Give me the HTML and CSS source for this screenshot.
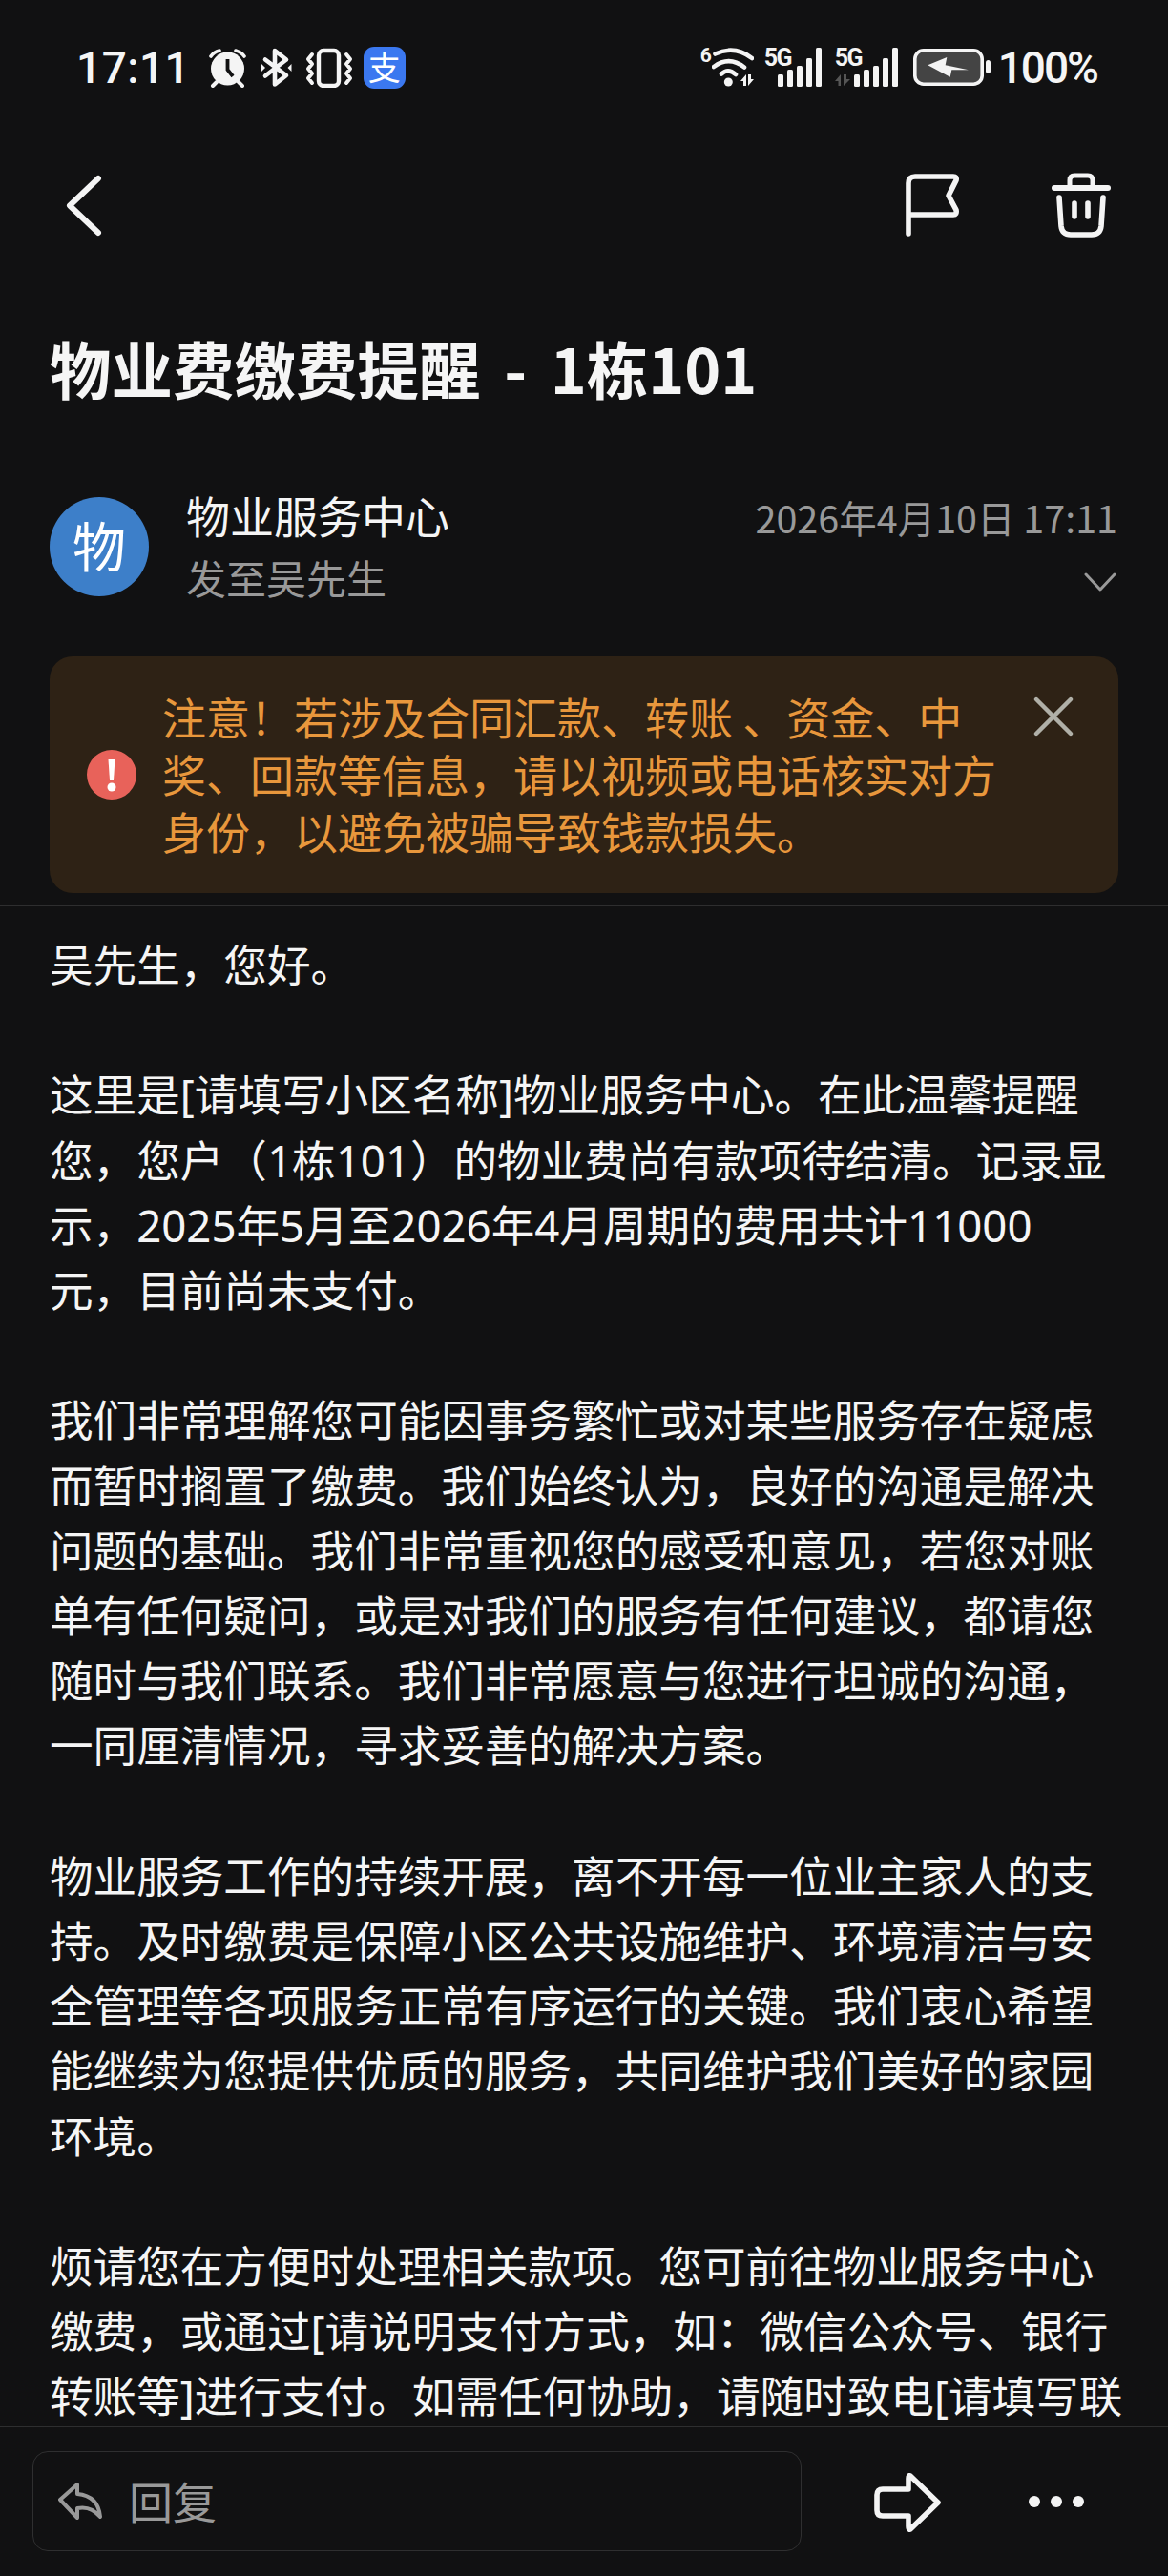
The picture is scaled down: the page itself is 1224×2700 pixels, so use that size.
FILE: index.html
```html
<!DOCTYPE html>
<html lang="zh-CN">
<head>
<meta charset="utf-8">
<title>物业费缴费提醒</title>
<link rel="stylesheet" href="styles.css">
</head>
<body>
<div class="page">
  <header class="statusbar">
    <div class="status-left">
      <span class="clock">17:11</span>
      <svg class="ic-alarm" width="40" height="42" viewBox="0 0 40 42">
        <circle cx="19.500" cy="22" r="17.500" fill="#f4f4f4"/>
        <path d="M2 9 C4 6 7 4 11 3 M37 9 C35 6 32 4 28 3" fill="none" stroke="#f4f4f4" stroke-width="3.600" stroke-linecap="round"/>
        <path d="M8 36 L4 40 M31 36 L35 40" stroke="#f4f4f4" stroke-width="4" stroke-linecap="round"/>
        <path d="M19.500 12 V23 L25 30" fill="none" stroke="#111112" stroke-width="3.800"/>
      </svg>
      <svg class="ic-bt" width="32" height="42" viewBox="0 0 32 42">
        <path d="M14 21 V38.500 L26 29 L4 12.500 M14 21 V3 L26 12.500 L4 29.500" fill="none" stroke="#f4f4f4" stroke-width="4.600" stroke-linecap="round" stroke-linejoin="round"/>
        <path d="M0 17 V25 L4 21 Z M31.500 17 V25 L27.500 21 Z" fill="#f4f4f4"/>
      </svg>
      <svg class="ic-vib" width="50" height="42" viewBox="0 0 50 42">
        <rect x="14" y="3" width="21" height="37" rx="5" fill="none" stroke="#f4f4f4" stroke-width="4.400"/>
        <path d="M7 7 L3 12 L7 17 L3 22 L7 27 L3 32 L7 37 M43 7 L47 12 L43 17 L47 22 L43 27 L47 32 L43 37" fill="none" stroke="#f4f4f4" stroke-width="4" stroke-linecap="round" stroke-linejoin="round"/>
      </svg>
      <span class="alipay">支</span>
    </div>
    <div class="status-right">
      <div class="wifi">
        <span class="wifi-six">6</span>
        <svg width="44" height="42" viewBox="0 0 44 42">
          <path d="M3.500 6.500 Q24 -3 42 11 M2 20 Q18 8 34 20.500 M10 27.500 Q17 21 25 28" fill="none" stroke="#f4f4f4" stroke-width="4.600" stroke-linecap="round"/>
          <circle cx="17.300" cy="36" r="4.500" fill="#f4f4f4"/>
          <path d="M30 35 L36 28 V40 H33 V35 Z M38 28 H41 V33 H44 L38 40 Z" fill="#f4f4f4"/>
        </svg>
      </div>
      <div class="cell cell-one">
        <span class="cell-tag">5G</span>
        <svg width="46" height="42" viewBox="0 0 46 42">
          <rect x="0" y="28" width="6" height="13" rx="1.500" fill="#f4f4f4"/>
          <rect x="10" y="23" width="6" height="18" rx="1.500" fill="#f4f4f4"/>
          <rect x="20" y="19" width="6" height="22" rx="1.500" fill="#f4f4f4"/>
          <rect x="30" y="11" width="6" height="30" rx="1.500" fill="#f4f4f4"/>
          <rect x="40" y="0" width="6" height="41" rx="1.500" fill="#f4f4f4"/>
        </svg>
      </div>
      <div class="cell cell-two">
        <span class="cell-tag">5G</span>
        <svg width="66" height="42" viewBox="0 0 66 42">
          <path d="M0 35 L6 28 V40 H3.500 V35 Z M9 28 H12 V33 H16 L9 40 Z" fill="#555"/>
          <rect x="20" y="28" width="6" height="13" rx="1.500" fill="#f4f4f4"/>
          <rect x="30" y="23" width="6" height="18" rx="1.500" fill="#f4f4f4"/>
          <rect x="40" y="19" width="6" height="22" rx="1.500" fill="#f4f4f4"/>
          <rect x="50" y="11" width="6" height="30" rx="1.500" fill="#f4f4f4"/>
          <rect x="60" y="0" width="6" height="41" rx="1.500" fill="#f4f4f4"/>
        </svg>
      </div>
      <svg class="ic-battery" width="82" height="42" viewBox="0 0 82 42">
        <rect x="2.800" y="2.800" width="70.400" height="35.400" rx="9" fill="#444" stroke="#f4f4f4" stroke-width="3.600"/>
        <path d="M16.300 18.300 L36.300 10 L34.700 18.300 L59 23.300 L41.300 23.300 L39.700 30.700 Z" fill="#f4f4f4"/>
        <rect x="77" y="13" width="5" height="14" rx="2.500" fill="#f4f4f4"/>
      </svg>
      <span class="percent">100%</span>
    </div>
  </header>

  <nav class="toolbar">
    <svg width="38" height="65" viewBox="0 0 38 65">
      <path d="M34 4 L4 32.500 L34 61" fill="none" stroke="#f4f4f4" stroke-width="6" stroke-linecap="round" stroke-linejoin="round"/>
    </svg>
    <div class="toolbar-actions">
      <svg width="56" height="66" viewBox="0 0 56 66">
        <path d="M3 63 V10 Q3 3 10 3 H50 Q54 3 53 7 L45 23 L53 38 Q54 43 50 43 H3" fill="none" stroke="#f4f4f4" stroke-width="5.600" stroke-linecap="round" stroke-linejoin="round"/>
      </svg>
      <svg width="62" height="68" viewBox="0 0 62 68">
        <path d="M3 16 H59" stroke="#f4f4f4" stroke-width="6" stroke-linecap="round"/>
        <path d="M19 14 V8 Q19 3 24 3 H38 Q43 3 43 8 V14" fill="none" stroke="#f4f4f4" stroke-width="5"/>
        <path d="M8 26 L10 56 Q11 65 20 65 H42 Q51 65 52 56 L54 26" fill="none" stroke="#f4f4f4" stroke-width="5.600" stroke-linecap="round"/>
        <path d="M24 32 V46 M38 32 V46" stroke="#f4f4f4" stroke-width="5.600" stroke-linecap="round"/>
      </svg>
    </div>
  </nav>

  <h1 class="subject">物业费缴费提醒 - 1栋101</h1>

  <section class="sender">
    <div class="avatar">物</div>
    <div class="sender-text">
      <div class="sender-name">物业服务中心</div>
      <div class="sender-to">发至吴先生</div>
    </div>
    <div class="sender-side">
      <div class="sent-at">2026年4月10日 17:11</div>
      <svg class="chevron" width="34" height="20" viewBox="0 0 34 20">
        <path d="M2 2 L17 18 L32 2" fill="none" stroke="#999" stroke-width="3" stroke-linecap="round" stroke-linejoin="round"/>
      </svg>
    </div>
  </section>

  <aside class="notice">
    <svg class="notice-icon" width="52" height="52" viewBox="0 0 52 52">
      <circle cx="26" cy="26" r="26" fill="#e8625a"/>
      <path d="M22.500 10 H29.500 L28 32 H24 Z" fill="#fff"/>
      <circle cx="26" cy="39" r="4.500" fill="#fff"/>
    </svg>
    <p class="notice-text">注意！若涉及合同汇款、转账 、资金、中<br>奖、回款等信息，请以视频或电话核实对方<br>身份，以避免被骗导致钱款损失。</p>
    <svg class="notice-close" width="42" height="42" viewBox="0 0 42 42">
      <path d="M3 3 L39 39 M39 3 L3 39" stroke="#b0b0a8" stroke-width="4.400" stroke-linecap="round"/>
    </svg>
  </aside>

  <main class="message">
    <p>吴先生，您好。</p>
    <p>这里是[请填写小区名称]物业服务中心。在此温馨提醒<br>您，您户（1栋101）的物业费尚有款项待结清。记录显<br>示，2025年5月至2026年4月周期的费用共计11000<br>元，目前尚未支付。</p>
    <p>我们非常理解您可能因事务繁忙或对某些服务存在疑虑<br>而暂时搁置了缴费。我们始终认为，良好的沟通是解决<br>问题的基础。我们非常重视您的感受和意见，若您对账<br>单有任何疑问，或是对我们的服务有任何建议，都请您<br>随时与我们联系。我们非常愿意与您进行坦诚的沟通，<br>一同厘清情况，寻求妥善的解决方案。</p>
    <p>物业服务工作的持续开展，离不开每一位业主家人的支<br>持。及时缴费是保障小区公共设施维护、环境清洁与安<br>全管理等各项服务正常有序运行的关键。我们衷心希望<br>能继续为您提供优质的服务，共同维护我们美好的家园<br>环境。</p>
    <p>烦请您在方便时处理相关款项。您可前往物业服务中心<br>缴费，或通过[请说明支付方式，如：微信公众号、银行<br>转账等]进行支付。如需任何协助，请随时致电[请填写联</p>
  </main>

  <footer class="replybar">
    <div class="reply-box">
      <svg width="46" height="40" viewBox="0 0 46 40">
        <path d="M20 2 L2 18 L20 37 L20 27 Q34 24 44 36 Q42 14 20 12 Z" fill="none" stroke="#999" stroke-width="4" stroke-linejoin="round"/>
      </svg>
      <span class="reply-label">回复</span>
    </div>
    <svg class="forward" width="70" height="62" viewBox="0 0 70 62">
      <path d="M38 3 Q36 2 36 6 V17 H9 Q3 17 3 23 V39 Q3 45 9 45 H36 V56 Q36 60 38 59 L67 31 Z" fill="none" stroke="#f4f4f4" stroke-width="5.600" stroke-linejoin="round"/>
    </svg>
    <div class="more"><i></i><i></i><i></i></div>
  </footer>
</div>
</body>
</html>
```

FILE: styles.css
```css
* { box-sizing: border-box; }

html, body { margin: 0; padding: 0; background: #111112; }

body {
  font-family: "Noto Sans CJK SC", "Noto Sans", sans-serif;
  color: #f5f5f5;
}

.page {
  width: 1224px;
  height: 2700px;
  display: flex;
  flex-direction: column;
  overflow: hidden;
  background: #111112;
}

/* status bar */
.statusbar {
  flex: none;
  height: 142px;
  padding: 0 74px 0 80px;
  display: flex;
  justify-content: space-between;
  align-items: center;
}

.status-left, .status-right { display: flex; align-items: center; }

.clock {
  font-family: "Roboto", sans-serif;
  font-weight: 500;
  font-size: 46px;
  line-height: 42px;
  letter-spacing: 0.500px;
  margin-right: 19.500px;
}

.ic-bt { margin-left: 15px; }
.ic-vib { margin-left: 14px; }

.alipay {
  width: 44px;
  height: 44px;
  margin-left: 11px;
  border-radius: 11px;
  background: #3b78f0;
  color: #fff;
  font-size: 34px;
  line-height: 42px;
  text-align: center;
}

.wifi, .cell { position: relative; display: flex; height: 42px; }

.wifi { padding-left: 12px; }

.wifi-six, .cell-tag {
  position: absolute;
  font-family: "Roboto", sans-serif;
  font-weight: 700;
  line-height: 26px;
  color: #f4f4f4;
}

.wifi-six { left: 0; top: -5px; font-size: 21px; }

.cell-tag { left: 0; top: -2px; font-size: 25px; letter-spacing: -1.500px; }

.cell-one { margin-left: 11px; padding-left: 14px; }
.cell-two { margin-left: 14px; }

.ic-battery { margin-left: 15px; }

.percent {
  font-family: "Roboto", sans-serif;
  font-weight: 500;
  font-size: 46px;
  line-height: 42px;
  letter-spacing: -2px;
  margin-left: 8px;
}

/* top actions */
.toolbar {
  flex: none;
  height: 146px;
  padding: 0 60px 0 69px;
  display: flex;
  justify-content: space-between;
  align-items: center;
}

.toolbar-actions { display: flex; align-items: center; gap: 97px; }

/* subject */
.subject {
  margin: 52px 0 0;
  padding: 0 52px;
  flex: none;
  font-size: 64.500px;
  line-height: 90px;
  font-weight: 700;
  word-spacing: 10px;
  color: #f5f5f5;
}

/* sender */
.sender {
  flex: none;
  margin-top: 79px;
  padding: 0 52px;
  display: flex;
  align-items: flex-start;
}

.avatar {
  flex: none;
  width: 104px;
  height: 104px;
  margin-top: 12px;
  border-radius: 50%;
  background: #3d7fc9;
  color: #fff;
  font-size: 56px;
  line-height: 98px;
  text-align: center;
}

.sender-text { flex: 1; margin-left: 39px; }

.sender-name { font-size: 46px; line-height: 60px; color: #f5f5f5; }

.sender-to { font-size: 42px; line-height: 72px; color: #999; }

.sender-side { display: flex; flex-direction: column; align-items: flex-end; }

.sent-at { font-size: 39.500px; line-height: 66px; color: #999; margin-right: 1px; }

.chevron { margin: 25px 2px 0 0; }

/* fraud notice */
.notice {
  flex: none;
  margin: 47px 52px 0;
  height: 248px;
  border-radius: 24px;
  background: #2e2215;
  padding: 0 48px 0 39px;
  display: flex;
  align-items: center;
  position: relative;
}

.notice-icon { flex: none; }

.notice-text {
  margin: 0 0 5px 27px;
  font-size: 46px;
  line-height: 60px;
  color: #e8973c;
  white-space: nowrap;
}

.notice-close { position: absolute; top: 42px; right: 47px; }

/* message body */
.message {
  flex: 1;
  min-height: 0;
  overflow: hidden;
  margin-top: 13px;
  border-top: 1px solid #2e2e2f;
  border-bottom: 1px solid #2e2e2f;
  padding: 27px 52px 0;
  font-family: "Noto Sans", "Noto Sans CJK SC", sans-serif;
  font-size: 45.600px;
  line-height: 68.200px;
  white-space: nowrap;
}

.message p { margin: 0 0 68.200px; }

/* reply bar */
.replybar {
  flex: none;
  height: 156px;
  padding: 25px 0 0 34px;
  display: flex;
  align-items: flex-start;
  position: relative;
}

.reply-box {
  width: 806px;
  height: 105px;
  border: 1.500px solid #2f2f30;
  border-radius: 16px;
  padding-left: 26px;
  display: flex;
  align-items: center;
}

.reply-label { margin-left: 28px; font-size: 46px; line-height: 60px; color: #999; padding-bottom: 4px; }

.forward { margin: 23px 0 0 76px; }

.more { display: flex; gap: 11px; margin: 47px 0 0 92px; }

.more i { width: 12px; height: 12px; border-radius: 50%; background: #f4f4f4; }
```
